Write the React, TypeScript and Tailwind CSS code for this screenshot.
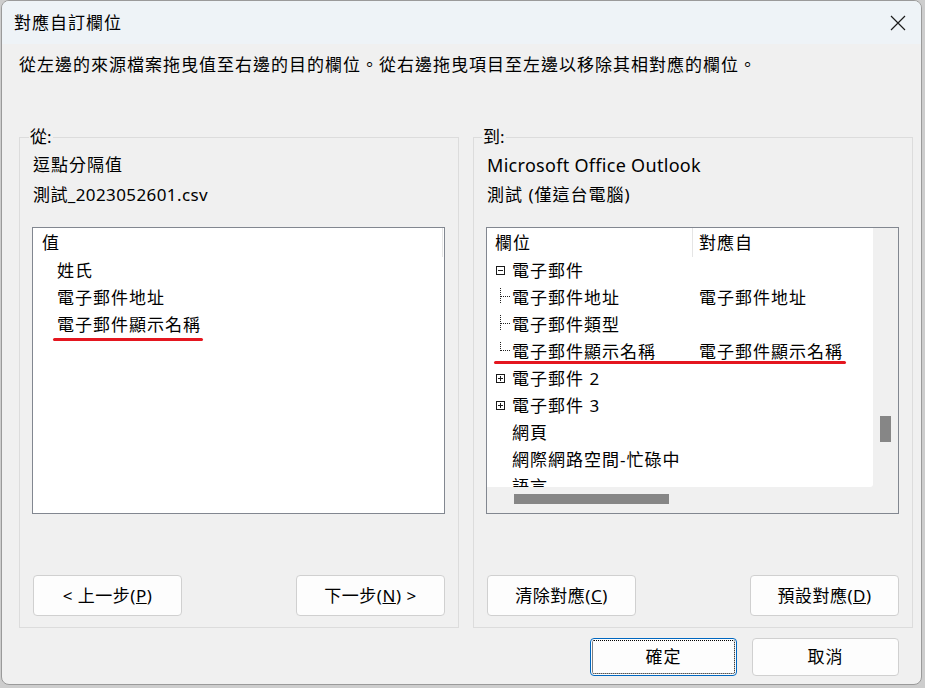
import React from 'react'

type TreeKind = 'minus' | 'plus' | 'child' | 'last' | 'none'

interface TreeRow {
  kind: TreeKind
  name: string
  mapped?: string
}

const rows: TreeRow[] = [
  { kind: 'minus', name: '電子郵件' },
  { kind: 'child', name: '電子郵件地址', mapped: '電子郵件地址' },
  { kind: 'child', name: '電子郵件類型' },
  { kind: 'last', name: '電子郵件顯示名稱', mapped: '電子郵件顯示名稱' },
  { kind: 'plus', name: '電子郵件 2' },
  { kind: 'plus', name: '電子郵件 3' },
  { kind: 'none', name: '網頁' },
  { kind: 'none', name: '網際網路空間-忙碌中' },
  { kind: 'none', name: '語言' },
]

function TreeGlyph({ kind }: { kind: TreeKind }) {
  return (
    <svg width="25" height="27" viewBox="0 0 25 27" shapeRendering="crispEdges" className="shrink-0">
      {(kind === 'minus' || kind === 'plus') && (
        <>
          <rect x="9.5" y="9.5" width="8" height="8" fill="white" stroke="#1a1a1a" strokeWidth="1" />
          <line x1="11" y1="13.5" x2="16" y2="13.5" stroke="#1a1a1a" strokeWidth="1" />
          {kind === 'plus' && <line x1="13.5" y1="11" x2="13.5" y2="16" stroke="#1a1a1a" strokeWidth="1" />}
        </>
      )}
      {(kind === 'child' || kind === 'last') && (
        <>
          <line
            x1="13.5"
            y1="4"
            x2="13.5"
            y2={kind === 'child' ? 19 : 13}
            stroke="#222"
            strokeWidth="1"
            strokeDasharray="1 1"
          />
          <line x1="14" y1="12.5" x2="24" y2="12.5" stroke="#222" strokeWidth="1" strokeDasharray="1 1" />
        </>
      )}
    </svg>
  )
}

function DlgButton({ children }: { children: React.ReactNode }) {
  return (
    <button className="h-[41px] w-[149px] rounded-[4px] border border-[#d0d0d0] bg-[#fdfdfd] text-[17px] tracking-[0.5px] text-black">
      {children}
    </button>
  )
}

export default function App() {
  return (
    <div className="w-[925px] h-[688px] overflow-hidden bg-[#cdcdcd] font-['Noto_Sans','Noto_Sans_CJK_TC',sans-serif] text-[17px] text-black">
      <div className="ml-[1px] flex h-[685px] w-[921px] flex-col overflow-hidden rounded-[8px] border border-[#9a9a9a] bg-[#f0f0f0]">
        {/* Title bar */}
        <div className="flex h-[43px] shrink-0 items-center justify-between bg-[#eef3f7] pl-[12px]">
          <span className="tracking-[1px]">對應自訂欄位</span>
          <div className="flex h-full w-[46px] items-center justify-center">
            <svg width="16" height="16" viewBox="0 0 16 16">
              <path d="M1 1 L15 15 M15 1 L1 15" stroke="#1b1b1b" strokeWidth="1.2" fill="none" />
            </svg>
          </div>
        </div>

        <p className="mt-[9px] pl-[17px] leading-[24px] tracking-[1px]">
          從左邊的來源檔案拖曳值至右邊的目的欄位。從右邊拖曳項目至左邊以移除其相對應的欄位。
        </p>

        <div className="mt-[48px] flex gap-[14px] pl-[17px]">
          {/* From */}
          <fieldset className="w-[440px] border border-[#dcdcdc] px-[13px] pb-[11px]">
            <legend className="ml-[-4px] px-[1px] leading-[24px]">從:</legend>
            <div className="mt-[1px] leading-[30px] tracking-[1px]">
              <div>逗點分隔值</div>
              <div className="tracking-[0.4px]">測試_2023052601.csv</div>
            </div>
            <div className="relative -ml-[1px] mt-[17px] h-[287px] w-[413px] border border-[#828790] bg-white">
              <div className="flex h-[29px] items-center">
                <div className="flex h-full w-[410px] items-center border-r border-[#e5e5e5] pl-[9px]">值</div>
              </div>
              <div className="tracking-[1px]">
                <div className="flex h-[27px] items-center pl-[24px]">姓氏</div>
                <div className="flex h-[27px] items-center pl-[24px]">電子郵件地址</div>
                <div className="flex h-[27px] items-center pl-[24px]">電子郵件顯示名稱</div>
              </div>
              <div className="absolute left-[20px] top-[110px] h-[3px] w-[150px] rounded-full bg-[#e4161f]" />
            </div>
            <div className="mt-[61px] flex justify-between">
              <DlgButton>
                &lt; 上一步(<u>P</u>)
              </DlgButton>
              <DlgButton>
                下一步(<u>N</u>) &gt;
              </DlgButton>
            </div>
          </fieldset>

          {/* To */}
          <fieldset className="w-[440px] border border-[#dcdcdc] px-[13px] pb-[11px]">
            <legend className="ml-[-5px] px-[1px] leading-[24px]">到:</legend>
            <div className="mt-[1px] leading-[30px]">
              <div className="text-[18px] tracking-[0.3px]">Microsoft Office Outlook</div>
              <div className="tracking-[1px]">測試 (僅這台電腦)</div>
            </div>
            <div className="relative -ml-[1px] mt-[17px] flex h-[287px] flex-col border border-[#828790] bg-[#f0f0f0]">
              <div className="flex min-h-0 flex-1">
                <div className="flex-1 overflow-hidden rounded-br-[3px] bg-white">
                  <div className="flex h-[29px] items-center">
                    <div className="flex h-full w-[206px] items-center border-r border-[#e5e5e5] pl-[8px] tracking-[1px]">
                      欄位
                    </div>
                    <div className="pl-[6px] tracking-[1px]">對應自</div>
                  </div>
                  {rows.map((r, i) => (
                    <div key={i} className="flex h-[27px] items-center tracking-[1px]">
                      <div className="flex w-[212px] items-center">
                        <TreeGlyph kind={r.kind} />
                        <span className="whitespace-nowrap">{r.name}</span>
                      </div>
                      {r.mapped && <span className="whitespace-nowrap">{r.mapped}</span>}
                    </div>
                  ))}
                </div>
                <div className="w-[25px] shrink-0 pl-[7px] pt-[188px]">
                  <div className="h-[26px] w-[11px] bg-[#868686]" />
                </div>
              </div>
              <div className="h-[26px] shrink-0 pl-[27px] pt-[7px]">
                <div className="h-[10px] w-[155px] bg-[#868686]" />
              </div>
              <div className="absolute left-[7px] top-[133px] h-[3px] w-[352px] rounded-full bg-[#e4161f]" />
            </div>
            <div className="mt-[61px] flex justify-between">
              <DlgButton>
                清除對應(<u>C</u>)
              </DlgButton>
              <DlgButton>
                預設對應(<u>D</u>)
              </DlgButton>
            </div>
          </fieldset>
        </div>

        <div className="mt-[10px] flex justify-end gap-[15px] pr-[22px]">
          <button className="h-[38px] w-[147px] rounded-[4px] border border-[#0067c0] bg-[#fdfdfd] tracking-[1px] outline-1 -outline-offset-3 outline-dotted outline-black">
            確定
          </button>
          <button className="h-[38px] w-[147px] rounded-[4px] border border-[#d0d0d0] bg-[#fdfdfd] tracking-[1px]">
            取消
          </button>
        </div>
      </div>
    </div>
  )
}
